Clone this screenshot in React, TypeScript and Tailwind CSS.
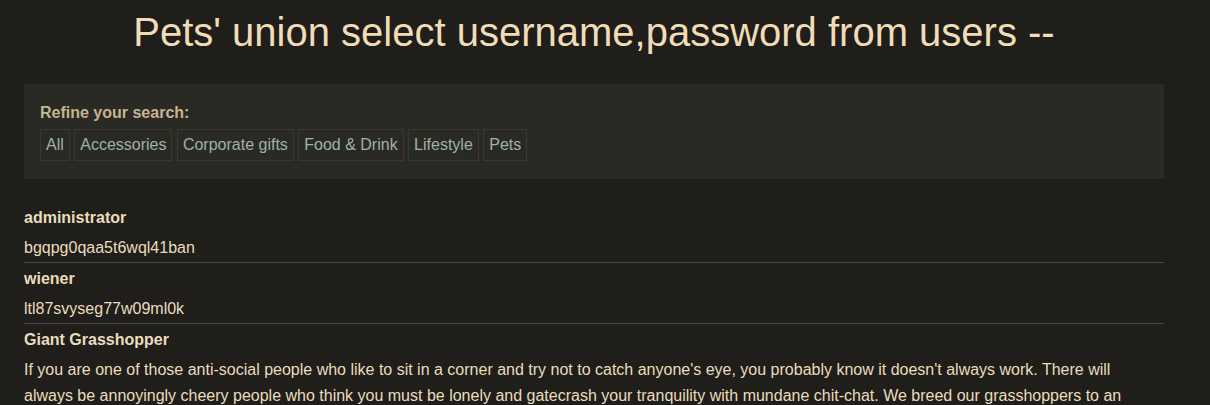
const FILTERS = ['All', 'Accessories', 'Corporate gifts', 'Food & Drink', 'Lifestyle', 'Pets']

const ROWS = [
  { head: 'administrator', body: 'bgqpg0qaa5t6wql41ban' },
  { head: 'wiener', body: 'ltl87svyseg77w09ml0k' },
  {
    head: 'Giant Grasshopper',
    body: "If you are one of those anti-social people who like to sit in a corner and try not to catch anyone's eye, you probably know it doesn't always work. There will always be annoyingly cheery people who think you must be lonely and gatecrash your tranquility with mundane chit-chat. We breed our grasshoppers to an unusually large size so that they can act as a deterrent to unwanted company.",
  },
]

export default function App() {
  return (
    <div className="h-[405px] overflow-hidden bg-[#1f1e1a] font-['Liberation_Sans',Arial,sans-serif] text-base">
      <div className="w-[1140px] ml-[24px]">
        <h1 className="text-center text-[40px] leading-[64px] text-[#f0dcb6] font-normal">
          Pets' union select username,password from users --
        </h1>

        {/* filter panel */}
        <section className="mt-[20px] bg-[#2a2a25] px-[16px] pt-[19px] pb-[18px]">
          <div className="font-bold text-[#c7b390] leading-[20px]">Refine your search:</div>
          <div className="mt-[6px] flex gap-[4.45px]">
            {FILTERS.map((f) => (
              <a
                key={f}
                className="h-[32px] px-[5px] flex items-center border border-[#3a3830] text-[#9fb1aa]"
              >
                {f}
              </a>
            ))}
          </div>
        </section>

        {/* results */}
        <table className="mt-[23px] w-full border-collapse">
          <tbody>
            {ROWS.map((r, i) => (
              <tr key={r.head} className={i < ROWS.length - 1 ? 'border-b border-[#4a4945]' : ''}>
                <td className="pt-[4px] pb-[1px] text-[#eadcbc]">
                  <div className="font-bold leading-[24px]">{r.head}</div>
                  <div className="mt-[5px] leading-[26px] pr-[10px]">{r.body}</div>
                </td>
              </tr>
            ))}
          </tbody>
        </table>
      </div>
    </div>
  )
}
